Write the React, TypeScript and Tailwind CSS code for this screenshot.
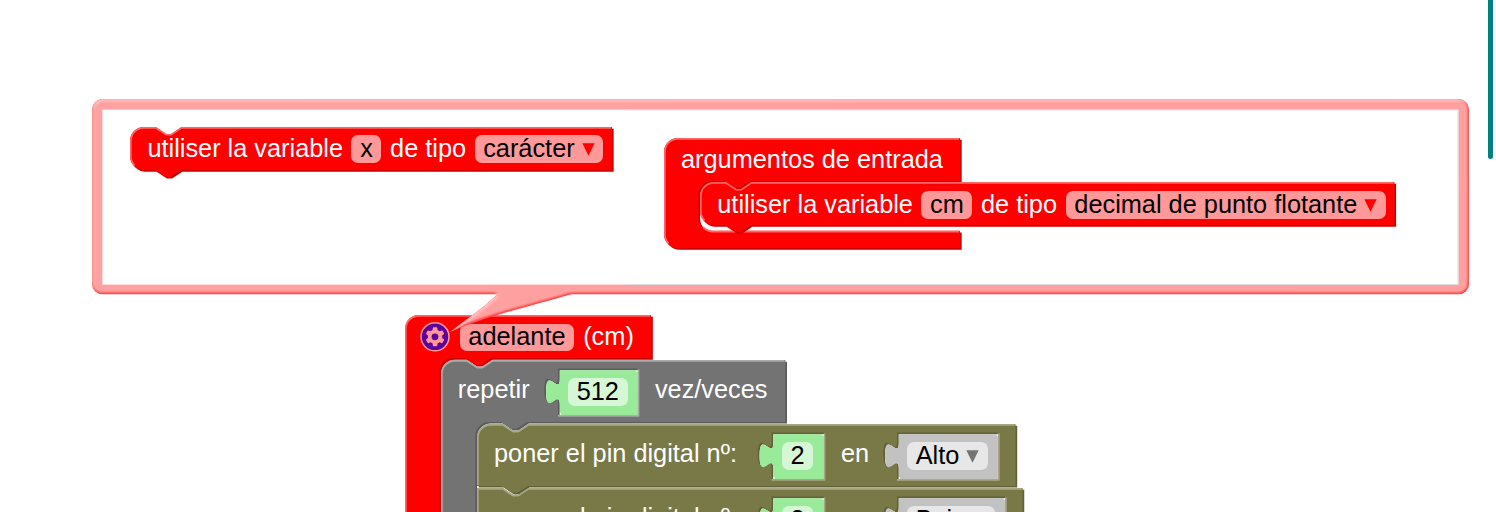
import React from "react";

const U = 1.728;
const TAB = "v 5 c 0,10 -8,-8 -8,7.5 s 8,-2.5 8,7.5";

type Socket = { x: number; w: number; tone: string };
type BlockProps = {
  x: number;
  y: number;
  w: number;
  h: number;
  row?: number;
  cavity?: number;
  fill: string;
  dark: string;
  light: string;
  notchTop?: boolean;
  notchBottom?: boolean;
  squareTop?: boolean;
  squareBottom?: boolean;
  sockets?: Socket[];
  children?: React.ReactNode;
};

function Block(p: BlockProps) {
  const row = p.row ?? p.h;
  const start = p.squareTop ? "M 0,0" : "M 0,8 A 8,8 0 0 1 8,0";
  const notch = p.notchTop ? "H 15 l 6,4 3,0 6,-4" : "";
  const cavity = p.cavity
    ? `H 50 l -6,4 -3,0 -6,-4 h -7 a 8,8 0 0 0 -8,8 v ${p.cavity - 16} a 8,8 0 0 0 8,8 H ${p.w} V ${p.h}`
    : "";
  const bottom = p.notchBottom ? "H 29.5 l -6,4 -3,0 -6,-4" : "";
  const end = p.squareBottom ? "H 0 Z" : "H 8 a 8,8 0 0 1 -8,-8 Z";
  const holes = (p.sockets ?? []).map((s) => `M ${s.x},5 ${TAB} V 32 h ${s.w} V 5 Z`).join(" ");
  const outline = `${start} ${notch} H ${p.w} V ${row} ${cavity} ${bottom} ${end} ${holes}`;
  const shine =
    (p.squareTop
      ? `M 0.5,${p.h - 0.5} V 0.5`
      : `M 0.5,${p.squareBottom ? p.h - 0.5 : p.h - 8} V 8 A 7.5,7.5 0 0 1 8,0.5`) +
    ` ${p.notchTop ? "H 15 l 6,4 3,0 6,-4" : ""} H ${p.w - 0.5}` +
    (p.squareBottom ? "" : ` M 2.7,${p.h - 2.7} A 7.5,7.5 0 0 1 0.5,${p.h - 8}`) +
    (p.cavity ? ` M 22.7,${row + p.cavity - 2.3} A 8.5,8.5 0 0 0 28,${row + p.cavity + 0.5} H ${p.w - 0.5}` : "");

  return (
    <div
      className="absolute whitespace-nowrap"
      style={{ left: p.x, top: p.y, width: p.w * U, height: p.h * U }}
    >
      <svg className="absolute left-0 top-0 overflow-visible" width={U} height={U} viewBox="0 0 1 1" fillRule="evenodd" fill="none">
        <path d={outline} fill={p.dark} transform="translate(1,1)" />
        <path d={outline} fill={p.fill} />
        <path d={shine} stroke={p.light} />
        {(p.sockets ?? []).map((s) => (
          <g key={s.x}>
            <path d={`M ${s.x + s.w + 0.5},5.5 V 32.5 H ${s.x}`} stroke={p.light} />
            <path d={`M ${s.x + 1},6 ${TAB} V 32 h ${s.w - 1} V 6 Z`} fill={s.tone} />
            <path d={`M ${s.x + s.w - 0.8},6.1 h 0.8 v 0.8 h -0.8 Z M ${s.x + 1},31 h 0.8 v 0.8 h -0.8 Z`} fill="#ffffff" />
          </g>
        ))}
      </svg>
      {p.children}
    </div>
  );
}

function Row({ className, children }: { className: string; children: React.ReactNode }) {
  return <div className={`relative flex h-7 items-center ${className}`}>{children}</div>;
}

function Field({ className, arrow, children }: { className: string; arrow?: string; children: React.ReactNode }) {
  return (
    <span className={`flex h-[27.6px] shrink-0 items-center justify-center rounded-[6.9px] pb-[2px] text-black ${className}`}>
      {children}
      {arrow && (
        <svg className="ml-[7px] mt-[3px]" width="13" height="13" viewBox="0 0 13 13">
          <path d="M0.3 0.3H12.7L6.5 12.7Z" fill={arrow} />
        </svg>
      )}
    </span>
  );
}

function Label({ className, children }: { className: string; children: React.ReactNode }) {
  return <span className={`shrink-0 pb-[2px] ${className}`}>{children}</span>;
}

const red = { fill: "#ff0000", dark: "#cc0000", light: "#ff6666" };
const gray = { fill: "#737373", dark: "#5c5c5c", light: "#ababab" };
const olive = { fill: "#797947", dark: "#616139", light: "#a8a887" };

function PinBlock({ y, w, pin, state, wide, squareTop }: { y: number; w: number; pin: string; state: string; wide: number; squareTop?: boolean }) {
  return (
    <Block
      x={476.7} y={y} w={w} h={36} {...olive} notchTop notchBottom squareBottom squareTop={squareTop}
      sockets={[{ x: 171.4, w: 30.3, tone: "#99eb99" }, { x: 244.4, w: wide, tone: "#c2c2c2" }]}
    >
      <Row className="mt-[18.6px] pl-[17.3px]">
        <Label className="-mt-[4px] w-[288px]">poner el pin digital nº:</Label>
        <Field className="w-[31px] bg-[#d6f7d6]">{pin}</Field>
        <Label className="-mt-[4px] ml-[28px] w-[66px]">en</Label>
        <Field className={wide > 60 ? "w-[88px] bg-[#e7e7e7]" : "w-[81px] bg-[#e7e7e7]"} arrow="#737373">{state}</Field>
      </Row>
    </Block>
  );
}

export default function App() {
  return (
    <main className="relative h-[512px] w-full overflow-hidden bg-white font-['Liberation_Sans',Arial,sans-serif] text-[25.33px] leading-[28px] text-white">
      <Block x={404.5} y={314.8} w={143.2} h={190} row={25} cavity={190} {...red}>
        <Row className="mt-[8.5px] pl-[55.2px]">
          <Field className="w-[114.5px] bg-[#ff9999]">adelante</Field>
          <Label className="ml-[9px]">(cm)</Label>
        </Row>
      </Block>
      <Block
        x={440.7} y={359.5} w={200.3} h={190} row={36} cavity={170} {...gray} notchTop
        sockets={[{ x: 68.1, w: 46.3, tone: "#99eb99" }]}
      >
        <Row className="mt-[18.5px] pl-[17.1px]">
          <Label className="-mt-[4px] w-[110px]">repetir</Label>
          <Field className="w-[60px] bg-[#d6f7d6]">512</Field>
          <Label className="-mt-[4px] ml-[27.1px]">vez/veces</Label>
        </Row>
      </Block>
      <PinBlock y={423.6} w={313.3} pin="2" state="Alto" wide={58.7} />
      <PinBlock y={487.6} w={317.4} pin="3" state="Bajo" wide={62.8} squareTop />

      <svg className="absolute left-0 top-0" width="1496" height="512" viewBox="0 0 1496 512" fill="none">
        <defs>
          <filter id="emboss" x="80" y="90" width="1400" height="260" filterUnits="userSpaceOnUse">
            <feGaussianBlur in="SourceAlpha" stdDeviation="1.7" result="blur" />
            <feSpecularLighting in="blur" surfaceScale="0.8" specularConstant="0.5" specularExponent="10" lightingColor="white" result="spec">
              <fePointLight x="-8640" y="-17280" z="34560" />
            </feSpecularLighting>
            <feComposite in="spec" in2="SourceAlpha" operator="in" result="spec2" />
            <feComposite in="SourceGraphic" in2="spec2" operator="arithmetic" k1="0" k2="1" k3="1" k4="0" />
          </filter>
        </defs>
        <g filter="url(#emboss)">
          <rect x="92" y="99" width="1377" height="195.3" rx="10.4" fill="#ff0000" />
          <path d="M502 288 C496 298 478 311 450 332 C495 313 530 307 578 292 Z" fill="#ff0000" />
        </g>
        <rect x="102.4" y="109.6" width="1356" height="175" fill="#ffffff" />
        <path d="M625 110H1458V284.5H625" stroke="#dddddd" />
        <g transform="translate(435 336.8)">
          <circle r="14" fill="#5f009b" stroke="#ff9999" strokeWidth="1.5" />
          <g transform="scale(1.85) translate(-8 -8)">
            <path
              fill="#ff9999"
              d="m4.203,7.296 0,1.368 -0.92,0.677 -0.11,0.41 0.9,1.559 0.41,0.11 1.043,-0.457 1.187,0.683 0.127,1.134 0.3,0.3 1.8,0 0.3,-0.299 0.127,-1.138 1.185,-0.682 1.046,0.458 0.409,-0.11 0.9,-1.559 -0.11,-0.41 -0.92,-0.677 0,-1.366 0.92,-0.677 0.11,-0.41 -0.9,-1.559 -0.409,-0.109 -1.046,0.458 -1.185,-0.682 -0.127,-1.138 -0.3,-0.299 -1.8,0 -0.3,0.3 -0.126,1.135 -1.187,0.682 -1.043,-0.457 -0.41,0.11 -0.899,1.559 0.108,0.409z"
            />
            <circle cx="8" cy="8" r="1.85" fill="#5f009b" />
          </g>
        </g>
      </svg>

      <Block x={130.3} y={127.2} w={280.4} h={25} {...red} notchTop notchBottom>
        <Row className="mt-[7.9px] pl-[17.1px]">
          <Label className="w-[204.1px]">utiliser la variable</Label>
          <Field className="w-[30px] bg-[#ff9999]">x</Field>
          <Label className="ml-[8.6px] w-[84.6px]">de tipo</Label>
          <Field className="w-[128.5px] bg-[#ff9999]" arrow="#ff0000">carácter</Field>
        </Row>
      </Block>
      <Block x={664.3} y={137.8} w={172.2} h={64} row={25} cavity={29} {...red}>
        <Row className="mt-[8.5px] pl-[16.7px]">
          <Label className="">argumentos de entrada</Label>
        </Row>
      </Block>
      <Block x={700.2} y={182.3} w={404} h={25} {...red} notchTop notchBottom>
        <Row className="mt-[8.5px] pl-[17.1px]">
          <Label className="w-[204.2px]">utiliser la variable</Label>
          <Field className="w-[51px] bg-[#ff9999]">cm</Field>
          <Label className="ml-[8.5px] w-[84.6px]">de tipo</Label>
          <Field className="w-[320.5px] bg-[#ff9999]" arrow="#ff0000">decimal de punto flotante</Field>
        </Row>
      </Block>

      <div className="absolute -top-2 left-[1488px] h-[167px] w-[5px] rounded-full bg-[#008080]" />
    </main>
  );
}
